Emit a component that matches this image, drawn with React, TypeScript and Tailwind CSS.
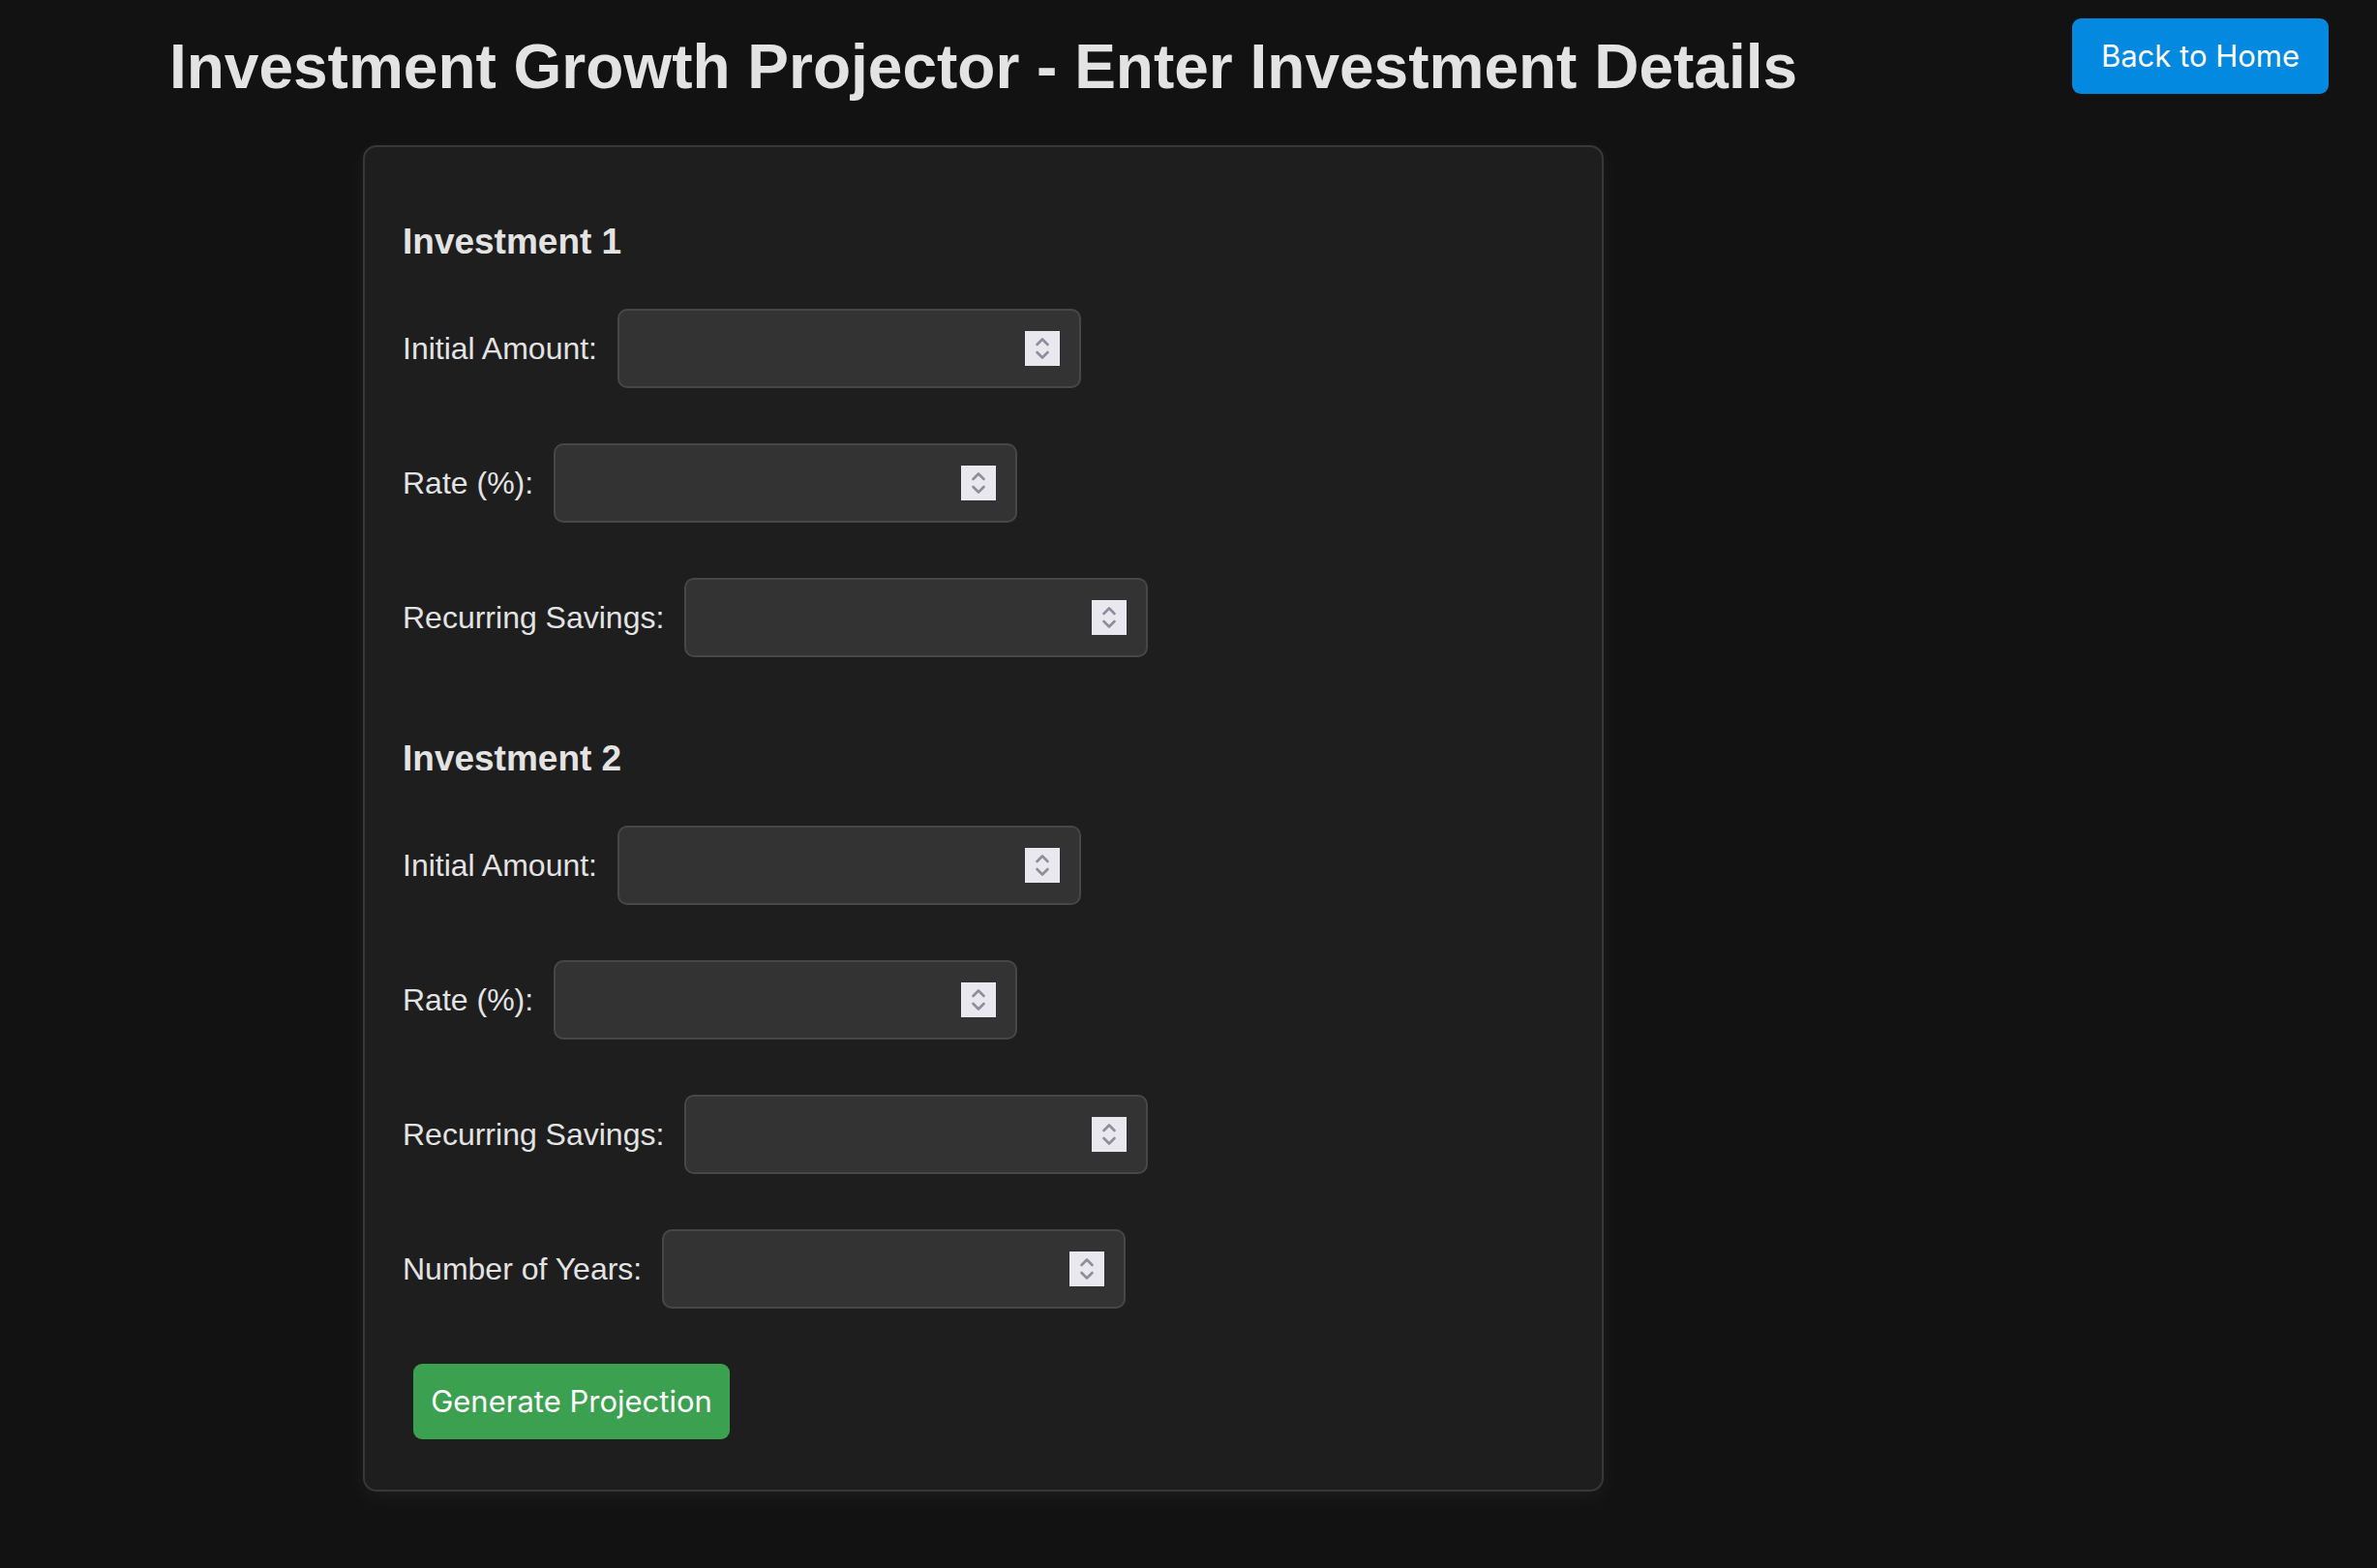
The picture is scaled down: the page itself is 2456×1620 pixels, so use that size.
import React from 'react';

const sans = { fontFamily: '"Liberation Sans", Arial, sans-serif' };

type Field = { label: string };

const groupOne: Field[] = [
  { label: 'Initial Amount:' },
  { label: 'Rate (%):' },
  { label: 'Recurring Savings:' },
];

const groupTwo: Field[] = [
  { label: 'Initial Amount:' },
  { label: 'Rate (%):' },
  { label: 'Recurring Savings:' },
  { label: 'Number of Years:' },
];

// Safari-style stepper drawn over the number input
const Spinner = () => (
  <div className="pointer-events-none absolute right-[22px] top-1/2 flex h-[36px] w-[36px] -translate-y-1/2 items-center justify-center bg-[#e9e8ee]">
    <svg width="16" height="26" viewBox="0 0 16 26" fill="none">
      <path d="M2.5 9 L8 3.5 L13.5 9" stroke="#8e8d9a" strokeWidth="2.6" strokeLinecap="round" strokeLinejoin="round" />
      <path d="M2.5 17 L8 22.5 L13.5 17" stroke="#8e8d9a" strokeWidth="2.6" strokeLinecap="round" strokeLinejoin="round" />
    </svg>
  </div>
);

const FieldRow = ({ label }: Field) => (
  <div className="mb-[57px] flex items-center gap-[21px]">
    <label className="text-[32px] leading-[37px] text-[#e3e3e3]">{label}</label>
    <div className="relative">
      <input
        type="text"
        className="h-[82px] w-[479px] rounded-[10px] border-2 border-[#474747] bg-[#333333] px-[20px] text-[32px] text-[#e0e0e0] outline-none"
      />
      <Spinner />
    </div>
  </div>
);

const Group = ({ title, fields }: { title: string; fields: Field[] }) => (
  <div>
    <h3 className="mb-[48px] text-[37px] font-bold leading-[43px] text-[#e3e3e3]">{title}</h3>
    {fields.map((f, i) => (
      <FieldRow key={i} label={f.label} />
    ))}
  </div>
);

export default function App() {
  return (
    <div className="relative min-h-screen w-full bg-[#121212]" style={sans}>
      <button
        className="absolute right-[50px] top-[19px] flex h-[78px] w-[265px] items-center justify-center rounded-[9px] bg-[#0389e0] text-[31px] text-white"
        style={{ fontFamily: 'Inter, "Liberation Sans", sans-serif' }}
      >
        Back to Home
      </button>

      <div className="flex w-[2032px] flex-col items-center pt-[32px]">
        <h1 className="text-[64px] font-bold leading-[74px] text-[#e3e3e3]">
          Investment Growth Projector - Enter Investment Details
        </h1>

        <div className="mt-[44px] w-[1282px] rounded-[14px] border-2 border-[#383838] bg-[#1e1e1e] pb-[52px] pl-[39px] pr-[38px] pt-[76px] shadow-[0_6px_22px_rgba(255,255,255,0.05)]">
          <Group title="Investment 1" fields={groupOne} />
          <div className="h-[26px]" />
          <Group title="Investment 2" fields={groupTwo} />
          <button
            className="ml-[11px] h-[78px] w-[327px] rounded-[9px] bg-[#3ba150] text-[31px] text-white"
            style={{ fontFamily: 'Inter, "Liberation Sans", sans-serif' }}
          >
            Generate Projection
          </button>
        </div>
      </div>
    </div>
  );
}
